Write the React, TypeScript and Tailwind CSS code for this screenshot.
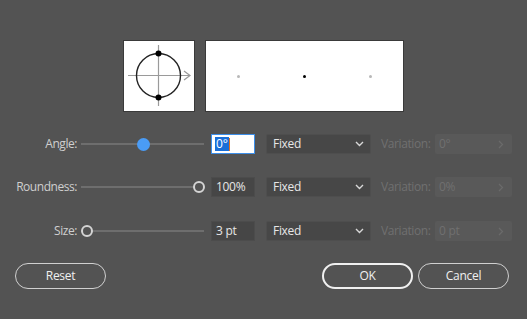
import React from "react";

const font = { fontFamily: '"Open Sans", "Noto Sans", sans-serif' };

function Chevron() {
  return (
    <svg width="9" height="6" viewBox="0 0 9 6" className="shrink-0">
      <path d="M1 1 L4.5 4.5 L8 1" fill="none" stroke="#d8d8d8" strokeWidth="1.4" />
    </svg>
  );
}

function RightChev() {
  return (
    <svg width="6" height="9" viewBox="0 0 6 9" className="shrink-0">
      <path d="M1 1 L4.5 4.5 L1 8" fill="none" stroke="#6a6a6a" strokeWidth="1.3" />
    </svg>
  );
}

function Slider({ pos, kind }: { pos: number; kind: "blue" | "ring" }) {
  return (
    <div className="relative w-[123px] h-[20px] flex items-center">
      <div className="w-full h-[2px] bg-[#6e6e6e]" />
      {kind === "blue" ? (
        <div
          className="absolute w-[13px] h-[13px] rounded-full bg-[#4a9cf6]"
          style={{ left: pos - 6.5, top: 3.5 }}
        />
      ) : (
        <div
          className="absolute w-[12px] h-[12px] rounded-full border-2 border-[#d4d4d4] bg-[#535353]"
          style={{ left: pos - 6, top: 4 }}
        />
      )}
    </div>
  );
}

function Row({
  label,
  slider,
  input,
  variation,
}: {
  label: string;
  slider: React.ReactNode;
  input: React.ReactNode;
  variation: string;
}) {
  return (
    <div className="flex items-center h-[20px]">
      <div className="w-[77px] text-right text-[12px] tracking-[-0.45px] text-[#cfcfcf]">{label}</div>
      <div className="w-[4px]" />
      {slider}
      <div className="w-[7px]" />
      {input}
      <div className="w-[11px]" />
      <div className="w-[105px] h-[20px] bg-[#474747] border border-[#4e4e4e] rounded-[2px] flex items-center justify-between pl-[6px] pr-[6px]">
        <span className="text-[12px] tracking-[-0.3px] text-[#e6e6e6]">Fixed</span>
        <Chevron />
      </div>
      <div className="w-[10px]" />
      <div className="w-[50px] text-[12px] tracking-[-0.4px] text-[#707070]">Variation:</div>
      <div className="w-[4px]" />
      <div className="w-[77px] h-[20px] bg-[#595959] rounded-[2px] flex items-center justify-between pl-[4px] pr-[8px]">
        <span className="text-[12px] tracking-[-0.3px] text-[#707070]">{variation}</span>
        <RightChev />
      </div>
    </div>
  );
}

export default function App() {
  return (
    <div className="w-[527px] h-[319px] bg-[#535353] flex flex-col" style={font}>
      <div className="h-[40px]" />
      <div className="flex justify-center gap-[10px]">
        <div className="w-[72px] h-[72px] bg-white border border-[#3a3a3a]">
          <svg width="70" height="70" viewBox="0 0 70 70">
            <line x1="4" y1="34.5" x2="66" y2="34.5" stroke="#9a9a9a" strokeWidth="1.2" />
            <path d="M60 30 L66 34.5 L60 39" fill="none" stroke="#9a9a9a" strokeWidth="1.2" />
            <line x1="34.5" y1="4" x2="34.5" y2="65" stroke="#9a9a9a" strokeWidth="1.2" />
            <circle cx="34.5" cy="34.5" r="22" fill="none" stroke="#222" strokeWidth="1.4" />
            <circle cx="34.5" cy="12.5" r="3" fill="#000" />
            <circle cx="34.5" cy="56.5" r="3" fill="#000" />
          </svg>
        </div>
        <div className="w-[199px] h-[72px] bg-white border border-[#3a3a3a] flex items-center justify-between px-[31px]">
          <div className="w-[3px] h-[3px] rounded-full bg-[#b8b8b8]" />
          <div className="w-[3px] h-[3px] rounded-full bg-[#000]" />
          <div className="w-[3px] h-[3px] rounded-full bg-[#b8b8b8]" />
        </div>
      </div>
      <div className="h-[22px]" />
      <div className="flex flex-col gap-[23px]">
        <Row
          label="Angle:"
          slider={<Slider pos={62} kind="blue" />}
          input={
            <div className="w-[44px] h-[20px] bg-white border border-[#3d8ee8] flex items-center pl-[3px]">
              <span className="text-[12px] leading-[14px] bg-[#1a6fd8] text-white px-[1px]">0°</span>
              <span className="w-[1px] h-[13px] bg-[#e07020]" />
            </div>
          }
          variation="0°"
        />
        <Row
          label="Roundness:"
          slider={<Slider pos={118} kind="ring" />}
          input={
            <div className="w-[44px] h-[20px] bg-[#464646] border border-[#4c4c4c] flex items-center pl-[4px]">
              <span className="text-[12px] tracking-[-0.3px] text-[#e6e6e6]">100%</span>
            </div>
          }
          variation="0%"
        />
        <div className="mt-[1px]">
          <Row
            label="Size:"
            slider={<Slider pos={6} kind="ring" />}
            input={
              <div className="w-[44px] h-[20px] bg-[#464646] border border-[#4c4c4c] flex items-center pl-[4px]">
                <span className="text-[12px] tracking-[-0.3px] text-[#e6e6e6]">3 pt</span>
              </div>
            }
            variation="0 pt"
          />
        </div>
      </div>
      <div className="h-[22px]" />
      <div className="flex items-center pl-[15px] pr-[18px]">
        <button className="w-[91px] h-[26px] rounded-full border border-[#d0d0d0] text-[12px] tracking-[-0.3px] text-[#f0f0f0]">
          Reset
        </button>
        <div className="flex-1" />
        <button className="w-[91px] h-[26px] rounded-full border-2 border-[#f0f0f0] text-[12px] tracking-[-0.3px] text-[#f0f0f0]">
          OK
        </button>
        <div className="w-[5px]" />
        <button className="w-[91px] h-[26px] rounded-full border border-[#d0d0d0] text-[12px] tracking-[-0.3px] text-[#f0f0f0]">
          Cancel
        </button>
      </div>
    </div>
  );
}
